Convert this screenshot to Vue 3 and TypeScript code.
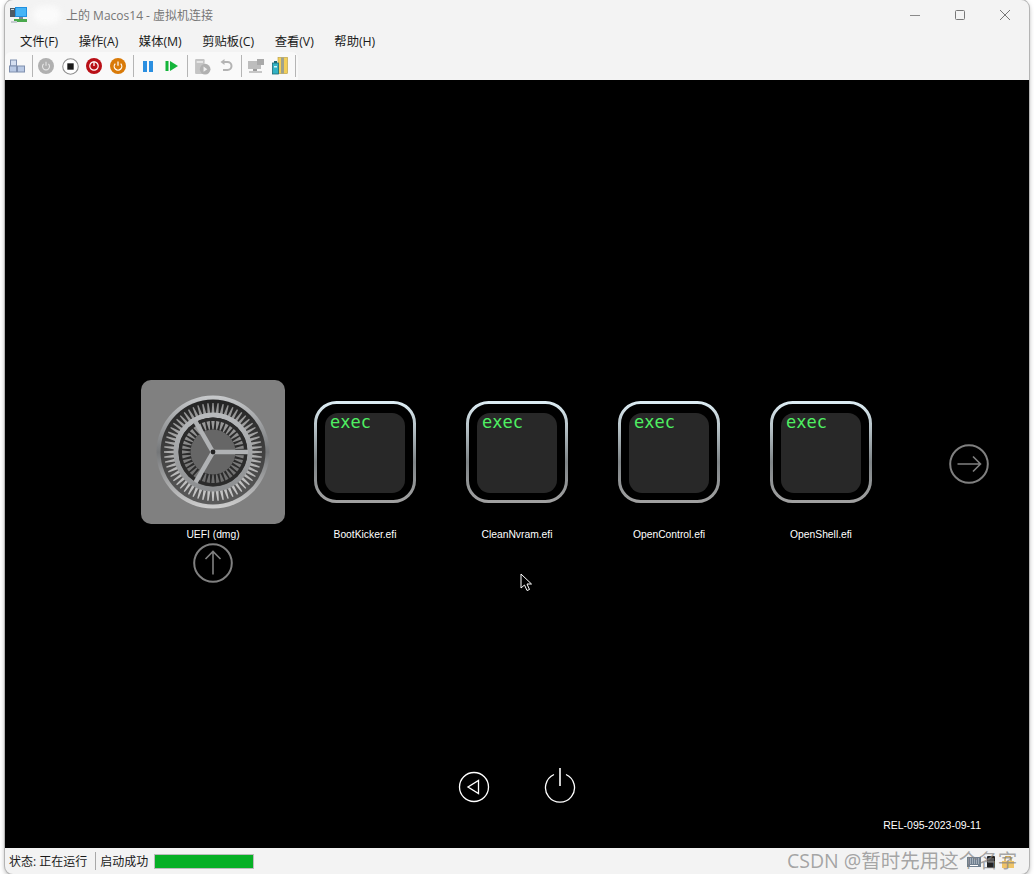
<script setup lang="ts">
type Tick = { x1: number; y1: number; x2: number; y2: number }

// radial lines for the gear spokes, centre 58,58
const ticks = (count: number, r1: number, r2: number): Tick[] => {
  const out: Tick[] = []
  for (let i = 0; i < count; i++) {
    const a = (i / count) * Math.PI * 2
    out.push({
      x1: 58 + Math.cos(a) * r1,
      y1: 58 + Math.sin(a) * r1,
      x2: 58 + Math.cos(a) * r2,
      y2: 58 + Math.sin(a) * r2,
    })
  }
  return out
}

// tapered gear teeth: wide at rBase, narrow at rTip
const teeth = (count: number, rBase: number, rTip: number, wBase: number, wTip: number): string[] => {
  const out: string[] = []
  for (let i = 0; i < count; i++) {
    const a = (i / count) * Math.PI * 2
    const c = Math.cos(a)
    const s = Math.sin(a)
    const pt = (r: number, w: number) => `${58 + c * r - s * w},${58 + s * r + c * w}`
    out.push([pt(rBase, wBase / 2), pt(rTip, wTip / 2), pt(rTip, -wTip / 2), pt(rBase, -wBase / 2)].join(' '))
  }
  return out
}

const outerTeeth = teeth(60, 37, 49, 3.2, 1.3)
const innerTeeth = teeth(40, 31, 22.5, 3.4, 1.2)
const spokes = ticks(3, 0, 35)

const menus = ['文件(F)', '操作(A)', '媒体(M)', '剪贴板(C)', '查看(V)', '帮助(H)']
const entries = ['BootKicker.efi', 'CleanNvram.efi', 'OpenControl.efi', 'OpenShell.efi']
</script>

<template>
  <div class="window">
    <header class="titlebar">
      <svg class="app-icon" width="18" height="18" viewBox="0 0 18 18">
        <rect x="0" y="2" width="5" height="9" fill="#4d5a63" />
        <rect x="1" y="3" width="3" height="1" fill="#cfd8dc" />
        <rect x="5" y="1" width="12" height="10" fill="#1f8fe0" />
        <rect x="6" y="2" width="10" height="8" fill="#45b4f5" />
        <rect x="9" y="11" width="4" height="2" fill="#7b8790" />
        <rect x="4" y="13" width="13" height="3" fill="#49a84c" />
        <rect x="1" y="15" width="6" height="2" fill="#c6ccd0" />
      </svg>
      <span class="blur-patch"></span>
      <span class="title">上的 Macos14 - 虚拟机连接</span>
      <div class="win-controls">
        <svg width="14" height="14" viewBox="0 0 14 14"><path d="M2 7.5h10" stroke="#8a8a8a" /></svg>
        <svg width="14" height="14" viewBox="0 0 14 14"><rect x="2.5" y="2.5" width="9" height="9" rx="1" fill="none" stroke="#777" /></svg>
        <svg width="14" height="14" viewBox="0 0 14 14"><path d="M2 2l10 10M12 2L2 12" stroke="#777" /></svg>
      </div>
    </header>

    <nav class="menubar">
      <span v-for="m in menus" :key="m">{{ m }}</span>
    </nav>

    <div class="toolbar">
      <div class="tools">
        <span class="tool first">
          <svg width="16" height="14" viewBox="0 0 16 14">
            <rect x="1.5" y="1" width="6" height="6" fill="#d5dff0" stroke="#7f8fae" />
            <rect x="0.5" y="7" width="7" height="6" fill="#b9c9e4" stroke="#7f8fae" />
            <rect x="8.5" y="7" width="7" height="6" fill="#b9c9e4" stroke="#7f8fae" />
          </svg>
        </span>
        <i class="sep"></i>
        <span class="tool">
          <svg width="16" height="16" viewBox="0 0 16 16">
            <circle cx="8" cy="8" r="8" fill="#b0b0b0" />
            <path d="M5.6 5.8a3.5 3.5 0 1 0 4.8 0M8 3.8v4" fill="none" stroke="#e6e6e6" stroke-width="1.1" />
          </svg>
        </span>
        <span class="tool">
          <svg width="17" height="17" viewBox="0 0 16 16">
            <circle cx="8" cy="8" r="7.3" fill="#fff" stroke="#8f8f8f" />
            <rect x="5" y="5" width="6" height="6" fill="#1a1a1a" />
          </svg>
        </span>
        <span class="tool">
          <svg width="16" height="16" viewBox="0 0 16 16">
            <circle cx="8" cy="8" r="8" fill="#b90f16" />
            <circle cx="8" cy="8" r="4.2" fill="none" stroke="#fff" stroke-width="1.2" />
            <path d="M8 3.4v4.6" stroke="#fff" stroke-width="1.3" />
          </svg>
        </span>
        <span class="tool">
          <svg width="16" height="16" viewBox="0 0 16 16">
            <circle cx="8" cy="8" r="8" fill="#d97a08" />
            <path d="M5.3 5.6a3.8 3.8 0 1 0 5.4 0M8 3.4v4.4" fill="none" stroke="#fff" stroke-width="1.2" />
          </svg>
        </span>
        <i class="sep"></i>
        <span class="tool">
          <svg width="12" height="12" viewBox="0 0 12 12">
            <rect x="1" y="1" width="4" height="11" fill="#2b8fe0" />
            <rect x="7" y="1" width="4" height="11" fill="#2b8fe0" />
          </svg>
        </span>
        <span class="tool">
          <svg width="14" height="12" viewBox="0 0 14 12">
            <rect x="0.5" y="1" width="3" height="10" fill="#14b53a" />
            <path d="M5 1l8 5-8 5z" fill="#14b53a" />
          </svg>
        </span>
        <i class="sep"></i>
        <span class="tool">
          <svg width="17" height="17" viewBox="0 0 16 16">
            <rect x="1" y="1" width="9" height="14" rx="1" fill="#c4c4c4" />
            <rect x="2.5" y="3" width="6" height="1.5" fill="#eee" />
            <circle cx="10.5" cy="10.5" r="5" fill="#b0b0b0" />
            <path d="M9 8l3.5 2.5L9 13z" fill="#eee" />
          </svg>
        </span>
        <span class="tool">
          <svg width="14" height="14" viewBox="0 0 14 14">
            <path d="M4 3h4.5a3.6 3.6 0 0 1 0 8H4" fill="none" stroke="#b3b3b3" stroke-width="2" />
            <path d="M5.5 0v6L1.5 3z" fill="#b3b3b3" />
          </svg>
        </span>
        <i class="sep"></i>
        <span class="tool">
          <svg width="16" height="16" viewBox="0 0 16 16">
            <rect x="0" y="3" width="13" height="8" fill="#bdbdbd" />
            <rect x="9" y="1" width="7" height="6" fill="#a9a9a9" />
            <rect x="5" y="11" width="4" height="2" fill="#9c9c9c" />
            <rect x="1" y="13" width="13" height="2" fill="#c6c6c6" />
          </svg>
        </span>
        <span class="tool">
          <svg width="16" height="18" viewBox="0 0 16 18">
            <rect x="6" y="0.5" width="9.5" height="16" fill="#f3cf58" stroke="#b59a3c" stroke-width=".6" />
            <rect x="9" y="0.5" width="3" height="16" fill="#9ea28f" />
            <rect x="0.5" y="6" width="6" height="11" fill="#33b3c4" stroke="#1c6b78" stroke-width=".8" />
            <rect x="2" y="4" width="3" height="2" fill="#1c6b78" />
            <rect x="2" y="9" width="3" height="1.5" fill="#d5f3f7" />
          </svg>
        </span>
        <i class="sep"></i>
      </div>
    </div>

    <main class="screen">
      <section class="picker">
        <div class="entry">
          <div class="icon-box selected">
            <svg width="116" height="116" viewBox="0 0 116 116">
              <defs>
                <linearGradient id="rim" x1="0" y1="0" x2="0" y2="1">
                  <stop offset="0" stop-color="#c8cacc" />
                  <stop offset=".5" stop-color="#747678" />
                  <stop offset="1" stop-color="#cfcfcf" />
                </linearGradient>
                <linearGradient id="well" x1="0" y1="0" x2="0" y2="1">
                  <stop offset="0" stop-color="#232323" />
                  <stop offset="1" stop-color="#5c5c5c" />
                </linearGradient>
                <linearGradient id="steel" x1="0" y1="0" x2="0" y2="1">
                  <stop offset="0" stop-color="#b8babc" />
                  <stop offset="1" stop-color="#8c8e90" />
                </linearGradient>
                <linearGradient id="tooth" gradientUnits="userSpaceOnUse" x1="0" y1="8" x2="0" y2="108">
                  <stop offset="0" stop-color="#909090" />
                  <stop offset="1" stop-color="#c8c8c8" />
                </linearGradient>
                <linearGradient id="inner" gradientUnits="userSpaceOnUse" x1="0" y1="26" x2="0" y2="90">
                  <stop offset="0" stop-color="#9c9c9c" />
                  <stop offset="1" stop-color="#6a6a6a" />
                </linearGradient>
              </defs>
              <circle cx="58" cy="58" r="56.500" fill="url(#rim)" />
              <circle cx="58" cy="58" r="52.500" fill="url(#well)" />
              <polygon v-for="(p, i) in outerTeeth" :key="'o' + i" :points="p" fill="url(#tooth)" />
              <circle cx="58" cy="58" r="37" fill="none" stroke="url(#steel)" stroke-width="5" />
              <circle cx="58" cy="58" r="34.500" fill="#2b2b2b" />
              <polygon v-for="(p, i) in innerTeeth" :key="'n' + i" :points="p" fill="url(#inner)" />
              <circle cx="58" cy="58" r="22.500" fill="#666" />
              <line
                v-for="(s, i) in spokes"
                :key="'s' + i"
                :x1="s.x1" :y1="s.y1" :x2="s.x2" :y2="s.y2"
                stroke="#b0b2b4" stroke-width="4.500"
              />
              <circle cx="58" cy="58" r="2.400" fill="#222" />
            </svg>
          </div>
          <span class="label">UEFI (dmg)</span>
          <svg class="up-arrow" width="40" height="40" viewBox="0 0 40 40">
            <circle cx="20" cy="20" r="18.800" fill="none" stroke="#808080" stroke-width="2" />
            <path d="M20 31.500V8.500M12.500 16L20 8.500l7.500 7.500" fill="none" stroke="#808080" stroke-width="1.600" />
          </svg>
        </div>

        <div v-for="name in entries" :key="name" class="entry">
          <div class="icon-box">
            <svg width="104" height="104" viewBox="0 0 104 104">
              <defs>
                <linearGradient id="frame" x1="0" y1="0" x2="0" y2="1">
                  <stop offset="0" stop-color="#dcecf3" />
                  <stop offset=".6" stop-color="#7f8588" />
                  <stop offset="1" stop-color="#a0a0a0" />
                </linearGradient>
              </defs>
              <rect x="2.500" y="2.500" width="99" height="99" rx="21" fill="#000" stroke="url(#frame)" stroke-width="3" />
              <rect x="12" y="13" width="80" height="80" rx="13" fill="#282828" />
              <text x="17" y="28" class="exec">exec</text>
            </svg>
          </div>
          <span class="label">{{ name }}</span>
        </div>

        <svg class="next-arrow" width="40" height="40" viewBox="0 0 40 40">
          <circle cx="20" cy="20" r="18.800" fill="none" stroke="#808080" stroke-width="2" />
          <path d="M8.500 20h23M24 12.500l7.500 7.500-7.500 7.500" fill="none" stroke="#808080" stroke-width="1.600" />
        </svg>
      </section>

      <section class="controls">
        <svg width="32" height="32" viewBox="0 0 32 32">
          <circle cx="16" cy="16" r="14.500" fill="none" stroke="#fff" stroke-width="1.300" />
          <path d="M20.500 9.500v13L10 16z" fill="none" stroke="#fff" stroke-width="1.300" />
        </svg>
        <svg width="32" height="36" viewBox="0 0 32 36">
          <path d="M10 7.500a14.500 14.500 0 1 0 12 0" fill="none" stroke="#fff" stroke-width="1.300" />
          <path d="M16 1v18" stroke="#fff" stroke-width="1.600" />
        </svg>
      </section>

      <footer class="version">REL-095-2023-09-11</footer>

      <svg class="cursor" width="12" height="19" viewBox="0 0 12 19">
        <path d="M1 1v14l3.500-3 2.500 5.500 2.500-1-2.500-5.500h4.500z" fill="#000" stroke="#fff" stroke-width="1" />
      </svg>
    </main>

    <footer class="statusbar">
      <span>状态: 正在运行</span>
      <i class="status-sep"></i>
      <span>启动成功</span>
      <span class="progress"></span>
      <div class="tray">
        <svg width="14" height="10" viewBox="0 0 14 10">
          <rect x="0" y="0" width="14" height="10" fill="#6f7f8f" />
          <path d="M1 2h12M1 4h12M1 6h12" stroke="#d8dee4" stroke-dasharray="1 1" />
          <rect x="3" y="8" width="8" height="1" fill="#fff" />
        </svg>
        <svg width="8" height="12" viewBox="0 0 8 12">
          <rect width="8" height="12" rx="1" fill="#222" />
          <rect x="1" y="2" width="6" height="5" fill="#555" />
        </svg>
        <svg width="14" height="12" viewBox="0 0 14 12">
          <path d="M4 5V3a3 3 0 0 1 6 0v2" fill="none" stroke="#c9a24a" stroke-width="1.400" />
          <rect x="1" y="5" width="12" height="7" fill="#efc468" />
        </svg>
      </div>
      <span class="watermark">CSDN @暂时先用这个名字</span>
    </footer>
  </div>
</template>

<style scoped>
.window {
  position: relative;
  width: 1024px;
  margin-left: 5px;
  font-family: "Open Sans", "Noto Sans CJK SC", sans-serif;
  font-size: 12px;
  color: #1a1a1a;
  background: #f3f3f3;
  border-radius: 8px;
  box-shadow: 0 0 0 1px #b4b4b4, 0 2px 5px rgba(0, 0, 0, 0.35);
}

.titlebar {
  display: flex;
  align-items: center;
  height: 30px;
  padding-left: 5px;
  border-radius: 8px 8px 0 0;
}

.app-icon {
  flex: none;
}

.blur-patch {
  width: 28px;
  height: 18px;
  margin-left: 5px;
  background: #fbfbfb;
  border-radius: 9px;
  filter: blur(3px);
}

.title {
  margin-left: 5px;
  color: #767676;
}

.win-controls {
  display: flex;
  gap: 31px;
  margin-left: auto;
  padding-right: 17px;
}

.menubar {
  display: flex;
  align-items: center;
  gap: 20.500px;
  height: 22px;
  padding-left: 15px;
  font-size: 12.300px;
}

.toolbar {
  height: 28px;
}

.tools {
  display: inline-flex;
  align-items: center;
  height: 28px;
  background: #f9f9f9;
  border-radius: 6px 6px 0 0;
}

.tool {
  display: flex;
  align-items: center;
  justify-content: center;
  width: 24px;
  height: 24px;
}

.sep {
  width: 1px;
  height: 22px;
  margin: 0 2px 0 3px;
  background: #b5b5b5;
}

.tool.first + .sep {
  margin-right: 1px;
}

.screen {
  position: relative;
  display: flex;
  flex-direction: column;
  height: 768px;
  background: #000;
}

.picker {
  display: flex;
  align-items: flex-start;
  height: 300px;
  padding: 300px 0 0 132px;
  box-sizing: content-box;
}

.entry {
  display: flex;
  flex-direction: column;
  align-items: center;
  width: 152px;
}

.icon-box {
  display: flex;
  align-items: center;
  justify-content: center;
  width: 144px;
  height: 144px;
  border-radius: 10px;
}

.icon-box.selected {
  background: #808080;
}

.label {
  margin-top: 5px;
  font-family: "Liberation Sans", sans-serif;
  font-size: 10.300px;
  line-height: 12px;
  color: #fff;
}

.up-arrow {
  margin-top: 2px;
}

.next-arrow {
  margin: 64px 0 0 52px;
}

.exec {
  font-family: "DejaVu Sans Mono", monospace;
  font-size: 17px;
  fill: #4fef62;
}

.controls {
  display: flex;
  align-items: flex-end;
  gap: 54px;
  margin: 87px 0 0 453px;
}

.version {
  align-self: flex-end;
  margin-top: 16px;
  padding-right: 48px;
  font-family: "Liberation Sans", sans-serif;
  font-size: 10.500px;
  line-height: 12px;
  color: #fff;
}

.cursor {
  position: absolute;
  left: 515px;
  top: 493px;
}

.statusbar {
  position: relative;
  display: flex;
  align-items: center;
  height: 26px;
  padding-left: 4px;
  border-radius: 0 0 8px 8px;
}

.status-sep {
  width: 1px;
  height: 18px;
  margin: 0 4px 0 8px;
  background: #a8a8a8;
}

.progress {
  width: 98px;
  height: 13px;
  margin-left: 6px;
  background: #06b025;
  border: 1px solid #bcbcbc;
}

.tray {
  position: absolute;
  left: 962px;
  top: 8px;
  display: flex;
  align-items: center;
  gap: 6px;
}

.watermark {
  position: absolute;
  left: 782px;
  top: 0;
  font-size: 19.500px;
  line-height: 26px;
  color: rgba(130, 130, 130, 0.7);
  white-space: nowrap;
}
</style>
